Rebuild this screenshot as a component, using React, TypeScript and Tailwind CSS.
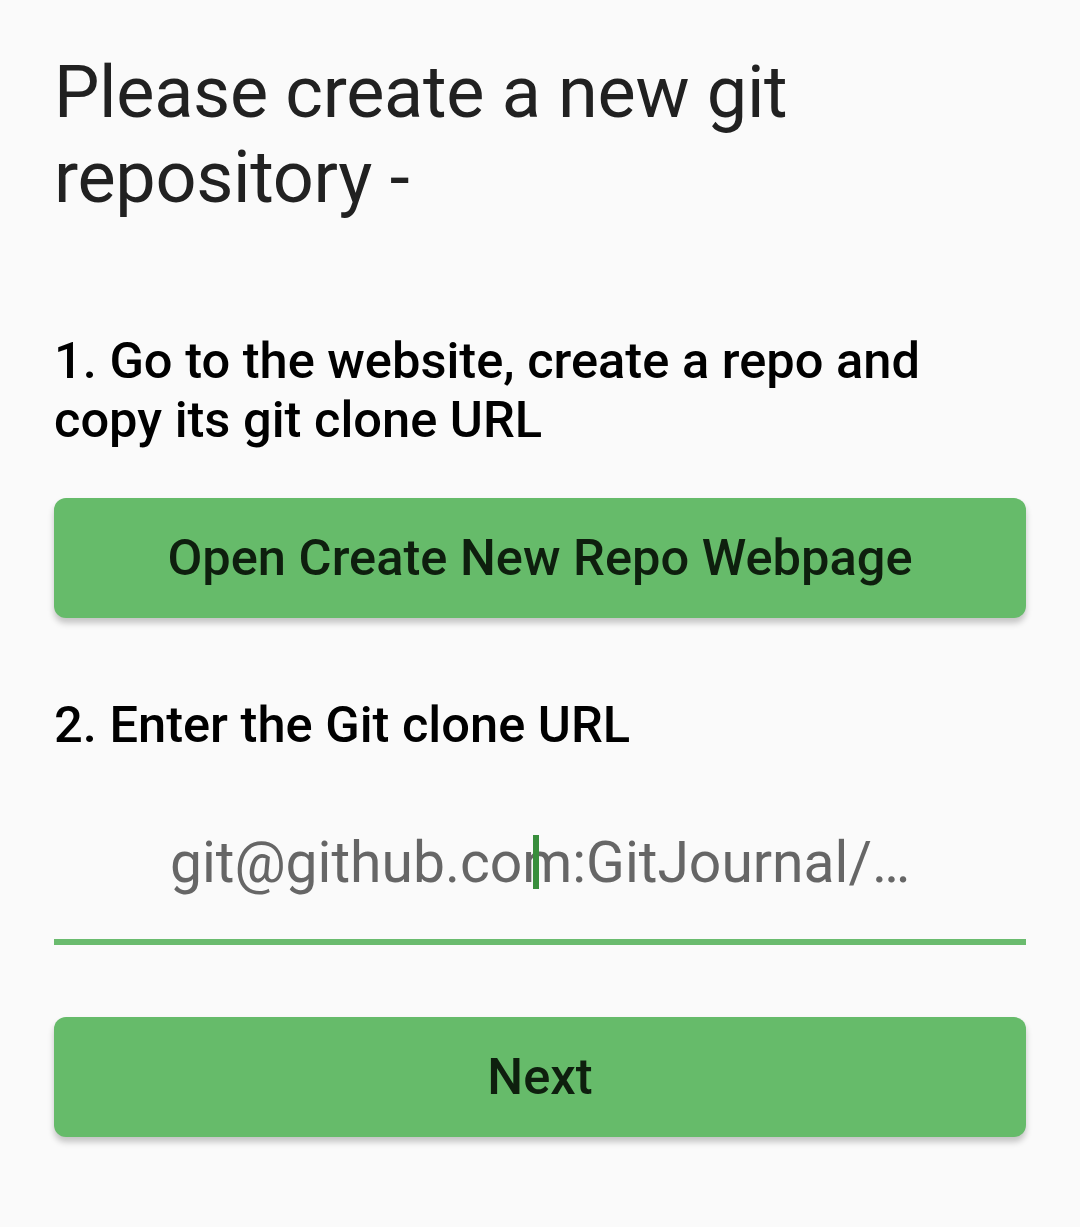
import React from 'react';

const font = { fontFamily: 'Roboto, "Noto Sans", sans-serif' };

export default function App() {
    return (
        <div className="min-h-[1227px] w-[1080px] bg-[#fafafa] px-[54px] pt-[50px]" style={font}>
            {/* Title */}
            <h1 className="text-[72px] leading-[85px] font-normal tracking-[-0.3px] text-[#212121]">
                Please create a new git repository -
            </h1>

            {/* Step 1 */}
            <p className="mt-[111px] text-[50.6px] leading-[59px] font-medium text-black">
                1. Go to the website, create a repo and copy its git clone URL
            </p>
            <button className="mt-[49px] flex h-[120px] w-full items-center justify-center rounded-[12px] bg-[#66bb6a] text-[50.6px] font-medium text-[#0e1f0e] shadow-[0_5px_6px_rgba(0,0,0,0.22)]">
                Open Create New Repo Webpage
            </button>

            {/* Step 2 */}
            <p className="mt-[77px] text-[50.6px] leading-[59px] font-medium text-black">
                2. Enter the Git clone URL
            </p>
            <div className="mt-[77px]">
                <div className="text-center text-[57px] leading-[64px] font-normal text-[#666666]">
                    git@github.co
                    <span className="relative">
                        <span className="absolute left-[11px] top-[6px] h-[54px] w-[6px] bg-[#388e3c]" />
                    </span>
                    m:GitJournal/…
                </div>
                <div className="mt-[44px] h-[6px] w-full bg-[#6abb6e]" />
            </div>

            <button className="mt-[72px] flex h-[120px] w-full items-center justify-center rounded-[12px] bg-[#66bb6a] text-[50.6px] font-medium text-[#0e1f0e] shadow-[0_5px_6px_rgba(0,0,0,0.22)]">
                Next
            </button>
        </div>
    );
}
